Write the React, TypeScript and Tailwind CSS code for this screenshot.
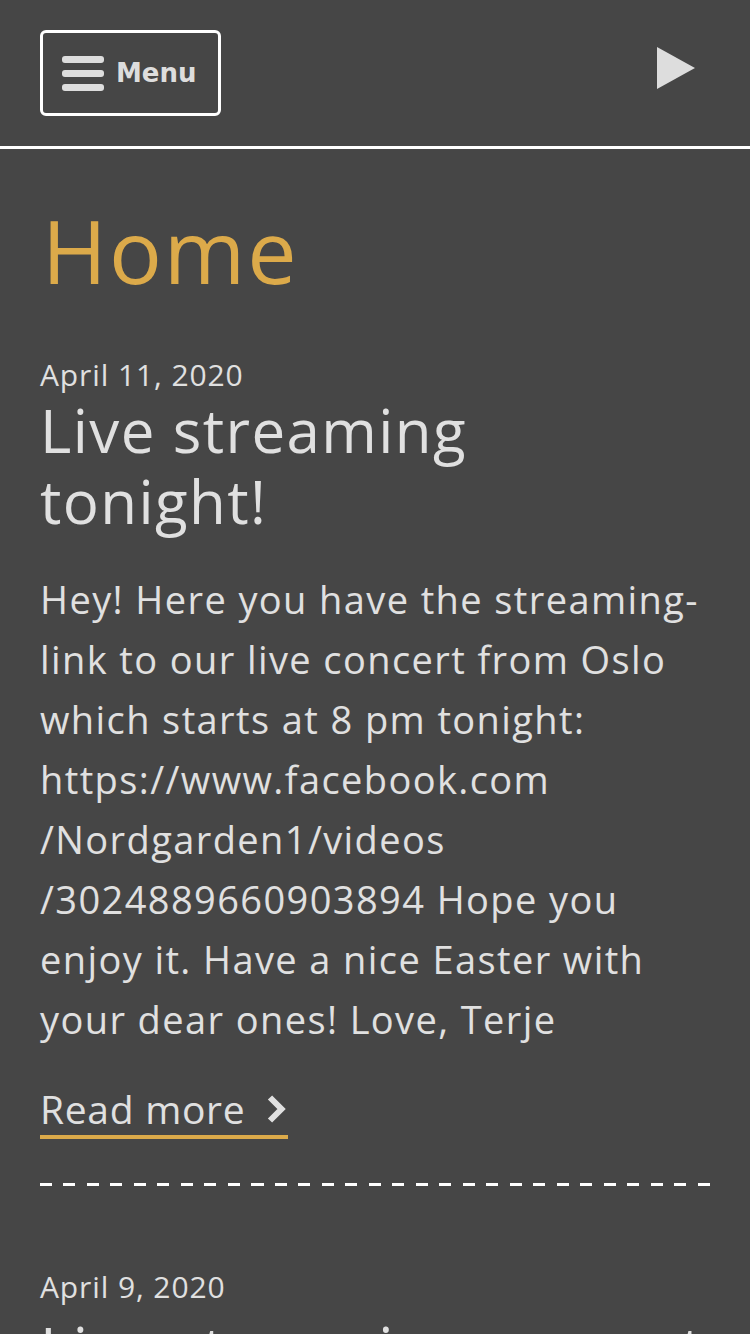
import React from 'react';

const bodyLines = [
  'Hey! Here you have the streaming-',
  'link to our live concert from Oslo',
  'which starts at 8 pm tonight:',
  'https://www.facebook.com',
  '/Nordgarden1/videos',
  '/3024889660903894 Hope you',
  'enjoy it. Have a nice Easter with',
  'your dear ones! Love, Terje',
];

const Header = () => (
  <header className="h-[149px] border-b-[3px] border-white px-10 pt-[30px] flex justify-between items-start">
    <button className="w-[181px] h-[86px] border-[3px] border-white rounded-[6px] flex items-center pl-[19px] gap-[12px]">
      <span className="flex flex-col gap-[7px] w-[42px]">
        <span className="h-[7px] rounded-[3px] bg-[#dddddd]" />
        <span className="h-[7px] rounded-[3px] bg-[#dddddd]" />
        <span className="h-[7px] rounded-[3px] bg-[#dddddd]" />
      </span>
      <span className="font-['DejaVu_Sans',sans-serif] font-bold text-[26px] text-[#dddddd] leading-none">Menu</span>
    </button>
    <svg width="38" height="42" viewBox="0 0 38 42" className="mt-[17px] mr-[15px]">
      <polygon points="0,0 38,21 0,42" fill="#dddddd" />
    </svg>
  </header>
);

export default function App() {
  return (
    <div className="min-h-[1334px] bg-[#464646] font-['Open_Sans',sans-serif] text-[#e0e0e0]">
      <Header />
      <main className="px-10">
        <h1 className="text-[#dcaa4a] text-[88px] leading-none tracking-[2px] pt-[57px] pl-[2px]">Home</h1>

        <article className="mt-[63px]">
          <div className="text-[30px] leading-[36px] tracking-[0.9px]">April 11, 2020</div>
          <h2 className="text-[60px] leading-[71px] tracking-[1.4px] mt-[2px]">
            Live streaming
            <br />
            tonight!
          </h2>
          <div className="mt-[32px] text-[38px] leading-[60px] tracking-[1.4px] whitespace-nowrap">
            {bodyLines.map((l) => (
              <div key={l}>{l}</div>
            ))}
          </div>
          <a className="mt-[38px] w-[248px] flex items-center justify-between text-[39px] leading-[44px] tracking-[0.7px] border-b-4 border-[#dcaa4a] pb-[4px]">
            Read more
            <svg width="20" height="28" viewBox="0 0 20 28" className="mr-[2px]">
              <path d="M4 2.5 L15.5 14 L4 25.5" stroke="#e0e0e0" strokeWidth="6" fill="none" />
            </svg>
          </a>
          <div className="mt-[44px] h-[3px] w-[670px] bg-[repeating-linear-gradient(to_right,#ffffff_0_12px,transparent_12px_23.5px)]" />
        </article>

        <article className="mt-[83px]">
          <div className="text-[30px] leading-[36px] tracking-[0.9px]">April 9, 2020</div>
          <h2 className="text-[60px] leading-[71px] tracking-[1.4px] mt-[8px] whitespace-nowrap">Live streaming concert</h2>
        </article>
      </main>
    </div>
  );
}
